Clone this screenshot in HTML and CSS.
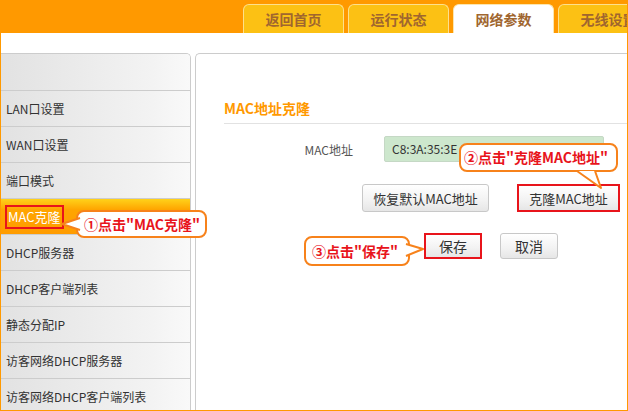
FILE: index.html
```html
<!DOCTYPE html>
<html lang="zh-CN">
<head>
    <meta charset="UTF-8">
    <title>MAC地址克隆</title>
    <link rel="stylesheet" href="styles.css">
</head>
<body>
    <div class="page">
        <div class="topbar">
            <div class="tabs">
                <div class="tab">返回首页</div>
                <div class="tab">运行状态</div>
                <div class="tab active">网络参数</div>
                <div class="tab">无线设置</div>
            </div>
        </div>

        <div class="main">
            <div class="sidebar">
                <div class="menu-head"></div>
                <div class="menu-item">LAN口设置</div>
                <div class="menu-item">WAN口设置</div>
                <div class="menu-item">端口模式</div>
                <div class="menu-item active"><span class="mark">MAC克隆</span></div>
                <div class="menu-item">DHCP服务器</div>
                <div class="menu-item">DHCP客户端列表</div>
                <div class="menu-item">静态分配IP</div>
                <div class="menu-item">访客网络DHCP服务器</div>
                <div class="menu-item">访客网络DHCP客户端列表</div>
            </div>

            <div class="content">
                <h2 class="title">MAC地址克隆</h2>
                <div class="form-row">
                    <label class="label">MAC地址</label>
                    <div class="mac-input">C8:3A:35:3E</div>
                </div>
                <div class="btn-row">
                    <button class="btn btn-restore">恢复默认MAC地址</button>
                    <button class="btn btn-clone mark">克隆MAC地址</button>
                </div>
                <div class="btn-row save-row">
                    <button class="btn btn-save mark">保存</button>
                    <button class="btn btn-cancel">取消</button>
                </div>
            </div>
        </div>

        <!-- bulles d'aide -->
        <div class="callout callout-1">
            <svg class="tail tail-left" width="20" height="16" viewBox="0 0 20 16">
                <path d="M19 2 L1 8 L19 14" fill="#fff" stroke="#f7821b" stroke-width="2" stroke-linejoin="round"/>
            </svg>
            ①点击"MAC克隆"
        </div>
        <div class="callout callout-2">
            <svg class="tail tail-down" width="30" height="20" viewBox="0 0 30 20">
                <path d="M2 1 L26 18 L20 1" fill="#fff" stroke="#f7821b" stroke-width="2" stroke-linejoin="round"/>
            </svg>
            ②点击"克隆MAC地址"
        </div>
        <div class="callout callout-3">
            <svg class="tail tail-right" width="20" height="16" viewBox="0 0 20 16">
                <path d="M1 2 L18 7 L1 14" fill="#fff" stroke="#f7821b" stroke-width="2" stroke-linejoin="round"/>
            </svg>
            ③点击"保存"
        </div>
    </div>
</body>
</html>
```

FILE: styles.css
```css
* {
    margin: 0;
    padding: 0;
    box-sizing: border-box;
}

body {
    font-family: "Noto Sans CJK SC", "DejaVu Sans", sans-serif;
    width: 628px;
    height: 411px;
    overflow: hidden;
    background: white;
}

.page {
    position: relative;
    width: 628px;
    height: 411px;
    border: 1px solid #ff9900;
    border-top: none;
    overflow: hidden;
}

.topbar {
    height: 33px;
    background: #ff9900;
    margin: 0 -1px;
    display: flex;
    align-items: flex-end;
    padding-left: 243px;
    overflow: hidden;
}

.tabs {
    display: flex;
    gap: 4px;
    white-space: nowrap;
}

.tab {
    flex-shrink: 0;
    width: 101px;
    height: 29px;
    background: #fcc114;
    border: 1px solid #fde08c;
    border-bottom: none;
    border-radius: 6px 6px 0 0;
    color: #a0662f;
    font-size: 14px;
    font-weight: bold;
    text-align: center;
    line-height: 28px;
}

.tab.active {
    background: white;
    border-color: #fbe6b0;
}

.main {
    display: flex;
    gap: 4px;
    padding-top: 20px;
}

.sidebar {
    width: 190px;
    border: 1px solid #cccccc;
    border-left: none;
    border-bottom: none;
    border-top-right-radius: 5px;
    overflow: hidden;
}

.menu-head,
.menu-item {
    height: 36px;
    border-bottom: 1px solid #cccccc;
    background: linear-gradient(90deg, #e2e2e2 0%, #f3f3f3 80%, #f9f9f9 100%);
}

.menu-head {
    height: 37px;
}

.menu-item {
    font-size: 12px;
    color: #333;
    padding-left: 5px;
    line-height: 35px;
}

.menu-item.active {
    background: linear-gradient(180deg, #ffd21a 0%, #ffa500 30%, #ff9c00 100%);
    color: white;
    padding-left: 4px;
    display: flex;
    align-items: center;
}

.menu-item.active .mark {
    line-height: 18px;
    padding: 1px 1px;
    font-size: 13px;
}

.mark {
    border: 2px solid #e8141b !important;
}

.content {
    flex: 1;
    height: 360px;
    border: 1px solid #cccccc;
    border-right: none;
    border-bottom: none;
    border-top-left-radius: 5px;
    padding: 45px 0 0 28px;
}

.title {
    color: #ff9900;
    font-size: 14px;
    font-weight: bold;
    line-height: 18px;
    padding-bottom: 6px;
    border-bottom: 1px solid #e2e2e2;
}

.form-row {
    display: flex;
    align-items: center;
    margin-top: 12px;
}

.label {
    width: 129px;
    text-align: right;
    font-size: 12px;
    color: #555;
    margin-right: 31px;
}

.mac-input {
    width: 220px;
    height: 26px;
    background: #cde7cd;
    border: 1px solid #c5d8c5;
    border-radius: 2px;
    font-size: 12px;
    color: #333;
    line-height: 24px;
    padding-left: 7px;
}

.btn-row {
    display: flex;
    margin-top: 22px;
    padding-left: 138px;
    gap: 28px;
}

.btn {
    font-family: inherit;
    font-size: 13px;
    color: #333;
    height: 28px;
    background: linear-gradient(180deg, #ffffff 0%, #f2f2f2 60%, #e6e6e6 100%);
    border: 1px solid #c8c8c8;
    border-radius: 3px;
}

.btn-restore {
    width: 127px;
}

.btn-clone {
    width: 103px;
    border-radius: 0;
}

.save-row {
    margin-top: 21px;
    padding-left: 200px;
    gap: 18px;
}

.btn-save,
.btn-cancel {
    width: 58px;
    height: 26px;
    font-size: 14px;
}

.btn-save {
    border-radius: 0;
}

.callout {
    position: absolute;
    background: white;
    border: 2px solid #f7821b;
    border-radius: 8px;
    color: #e8141b;
    font-weight: bold;
    font-size: 14px;
    line-height: 24px;
    padding: 0 6px;
    white-space: nowrap;
}

.tail {
    position: absolute;
}

.callout-1 {
    left: 75px;
    top: 210px;
    width: 131px;
    height: 28px;
}

.tail-left {
    left: -17px;
    top: 4px;
}

.callout-2 {
    left: 458px;
    top: 143px;
    width: 159px;
    height: 29px;
    line-height: 25px;
    padding: 0 3px;
}

.tail-down {
    left: 114px;
    top: 25px;
}

.callout-3 {
    left: 303px;
    top: 236px;
    width: 106px;
    height: 30px;
    line-height: 26px;
}

.tail-right {
    right: -17px;
    top: 4px;
}
```
